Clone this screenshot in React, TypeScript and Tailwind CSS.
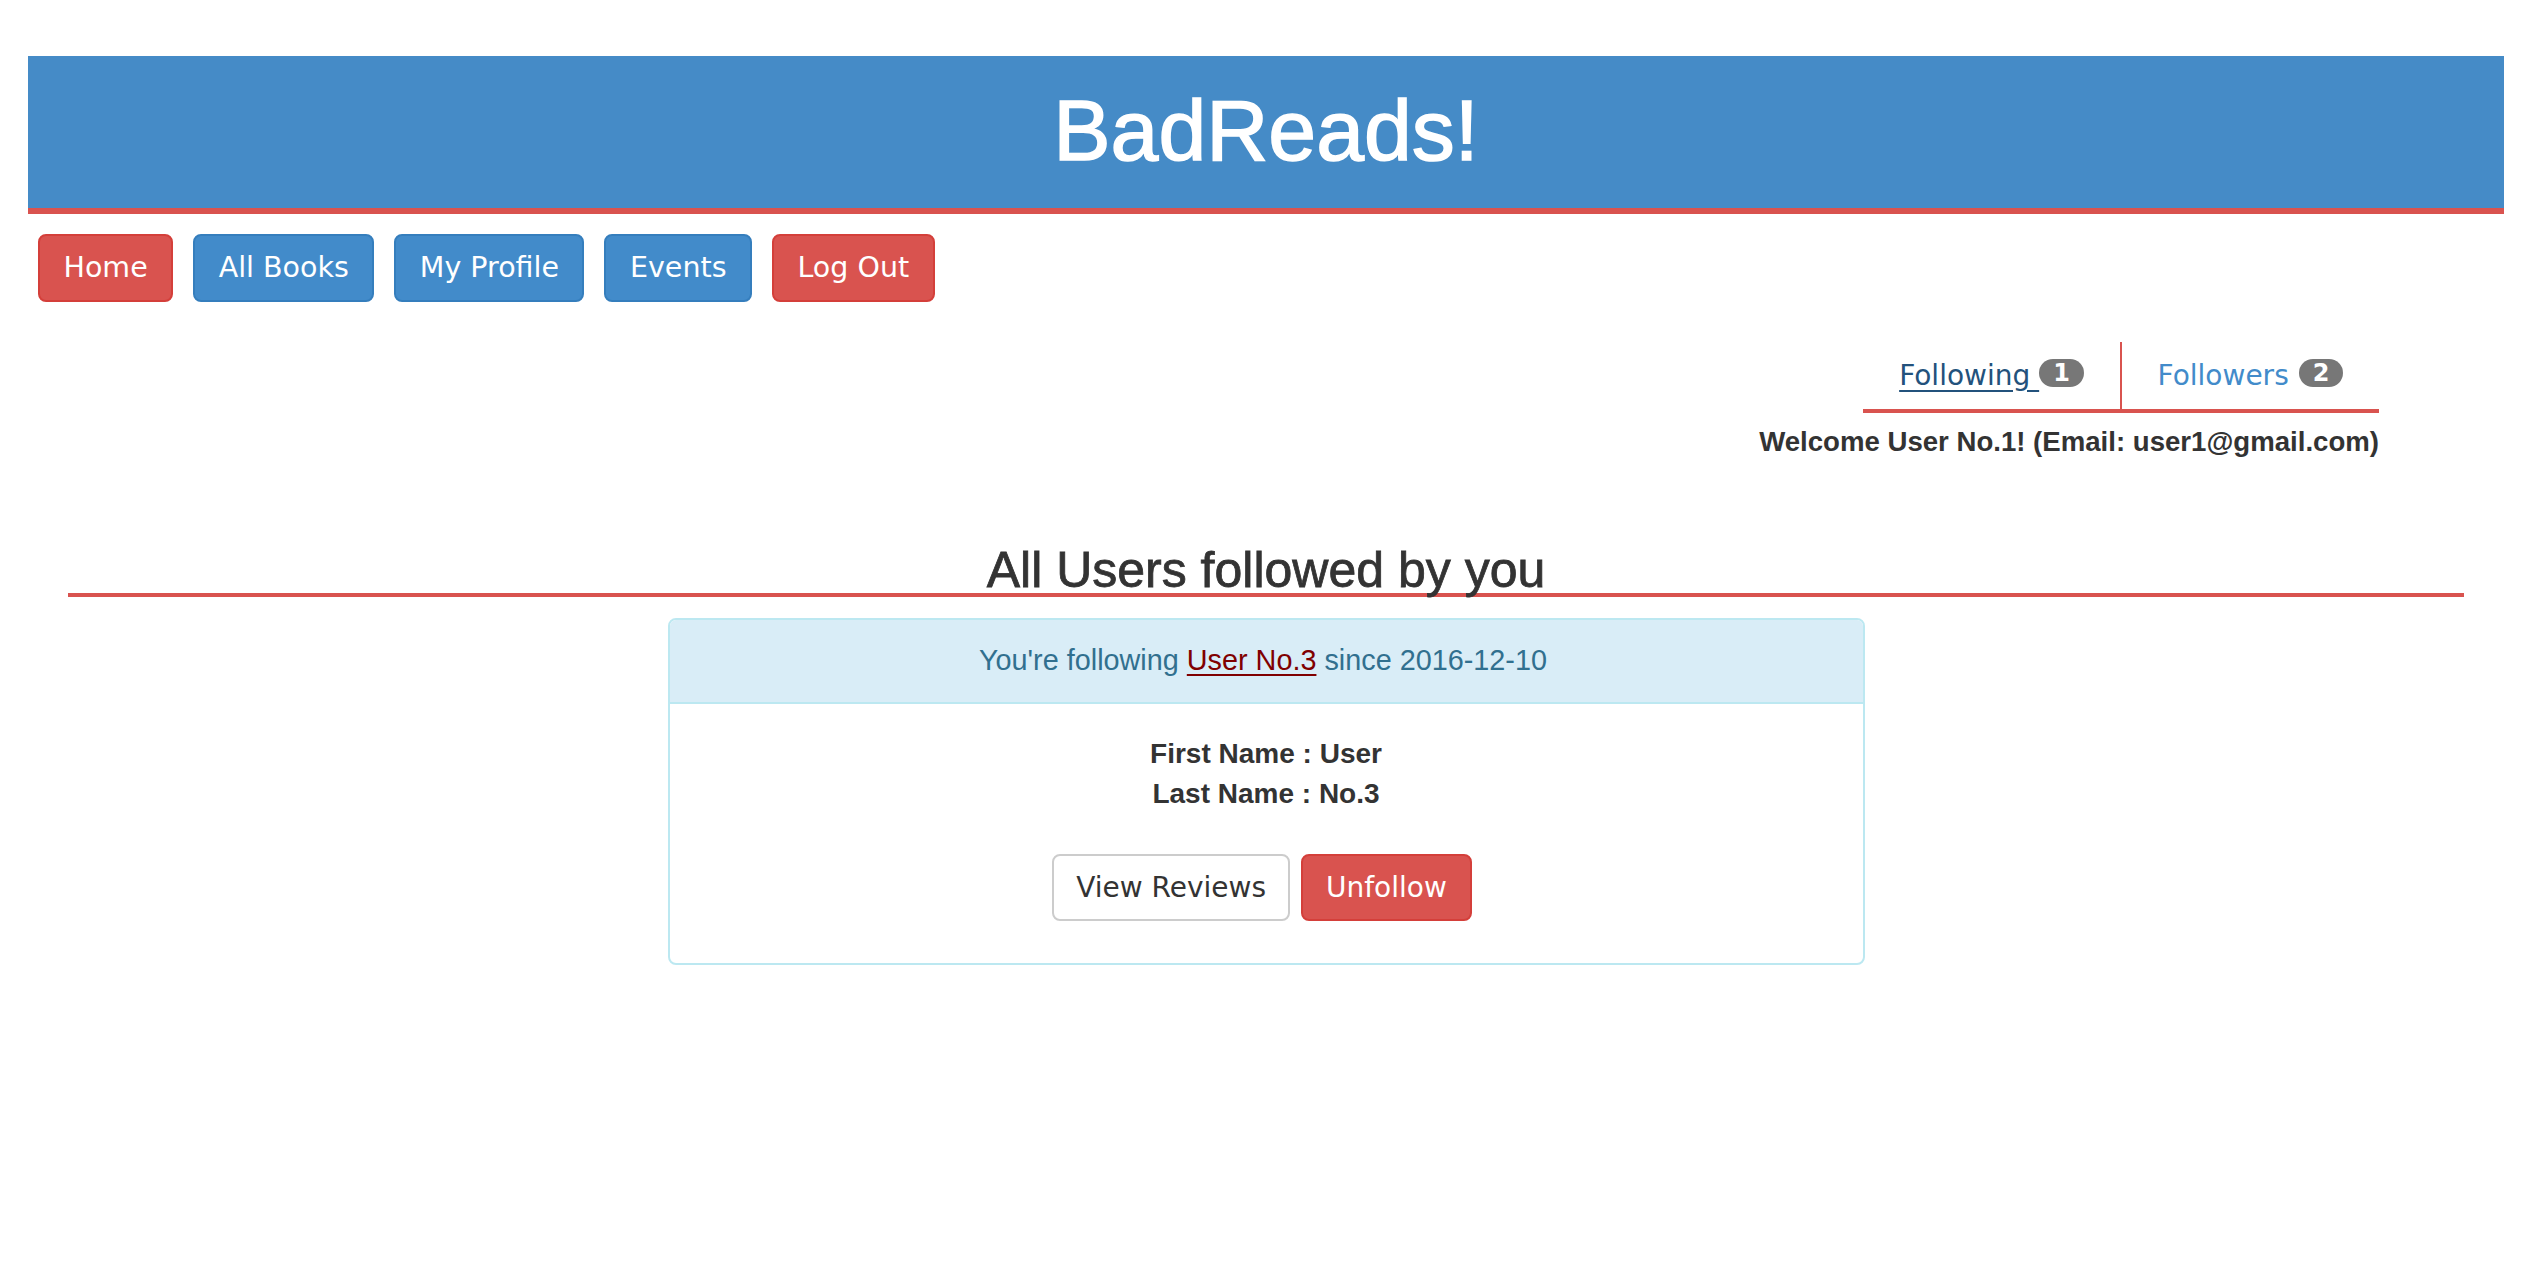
const sans = "font-['Liberation_Sans',Arial,sans-serif]";
const btnFont = "font-['DejaVu_Sans',Verdana,sans-serif]";

function NavButton({ label, red }: { label: string; red?: boolean }) {
  return (
    <button
      className={`${btnFont} h-[68px] px-[23.5px] rounded-[8px] border-2 text-[28.5px] text-white leading-none ${
        red ? 'bg-[#d9534f] border-[#d43f3a]' : 'bg-[#428bca] border-[#357ebd]'
      }`}
    >
      {label}
    </button>
  );
}

function Badge({ n }: { n: number }) {
  return (
    <span className="inline-flex h-[28px] items-center rounded-full bg-[#777777] px-[14px] text-[24px] font-bold leading-none text-white -translate-y-[3px] no-underline">
      {n}
    </span>
  );
}

export default function App() {
  return (
    <div className={`${sans} bg-white min-h-[1262px] pt-[56px] pl-[28px] pr-[26px] text-[#333333]`}>
      {/* Banner */}
      <header className="h-[158px] bg-[#458bc7] border-b-[6px] border-[#d9534f] flex items-center justify-center">
        <h1 className="text-[86px] leading-none text-white pb-[4px] [-webkit-text-stroke:1.5px_white]">BadReads!</h1>
      </header>

      {/* Main nav */}
      <nav className="flex gap-[20px] pl-[10px] mt-[20px]">
        <NavButton label="Home" red />
        <NavButton label="All Books" />
        <NavButton label="My Profile" />
        <NavButton label="Events" />
        <NavButton label="Log Out" red />
      </nav>

      {/* Follow tabs */}
      <div className="flex flex-col items-end pr-[125px] mt-[40px]">
        <div className={`${btnFont} flex w-[516px] border-b-4 border-[#d9534f] text-[28px]`}>
          <a className="flex h-[67px] flex-1 items-center justify-center border-r-2 border-[#d9534f] text-[#23527c]">
            <span className="underline underline-offset-[5px]">Following&nbsp;</span>
            <Badge n={1} />
          </a>
          <a className="flex h-[67px] flex-1 items-center justify-center gap-[10px] text-[#428bca]">
            <span>Followers</span>
            <Badge n={2} />
          </a>
        </div>
        <p className="mt-[9px] text-[27.6px] font-bold leading-[40px] text-[#333333]">
          Welcome User No.1! (Email: user1@gmail.com)
        </p>
      </div>

      {/* Followed users */}
      <h3 className="mx-[40px] mt-[85px] border-b-4 border-[#d9534f] text-center text-[50px] leading-[46px] text-[#333333] [-webkit-text-stroke:0.8px_#333333]">
        All Users followed by you
      </h3>

      <div className="mx-auto mt-[21px] w-[1197px] rounded-[8px] border-2 border-[#bce8f1] overflow-hidden">
        <div className="flex h-[84px] items-center justify-center border-b-2 border-[#bce8f1] bg-[#d9edf7] pr-[6px] text-[28.8px] text-[#31708f]">
          <span>
            You're following{' '}
            <a className="text-[#800000] underline underline-offset-[4px]">User No.3</a> since 2016-12-10
          </span>
        </div>
        <div className="flex flex-col items-center pt-[30px] pb-[42px]">
          <p className="text-[28px] font-bold leading-[40px]">First Name : User</p>
          <p className="text-[28px] font-bold leading-[40px]">Last Name : No.3</p>
          <div className="mt-[40px] flex gap-[11px] pr-[8px]">
            <button className={`${btnFont} h-[67px] px-[22px] rounded-[8px] border-2 border-[#cccccc] bg-white text-[28px] text-[#333333]`}>
              View Reviews
            </button>
            <button className={`${btnFont} h-[67px] px-[23px] rounded-[8px] border-2 border-[#d43f3a] bg-[#d9534f] text-[28px] text-white`}>
              Unfollow
            </button>
          </div>
        </div>
      </div>
    </div>
  );
}
